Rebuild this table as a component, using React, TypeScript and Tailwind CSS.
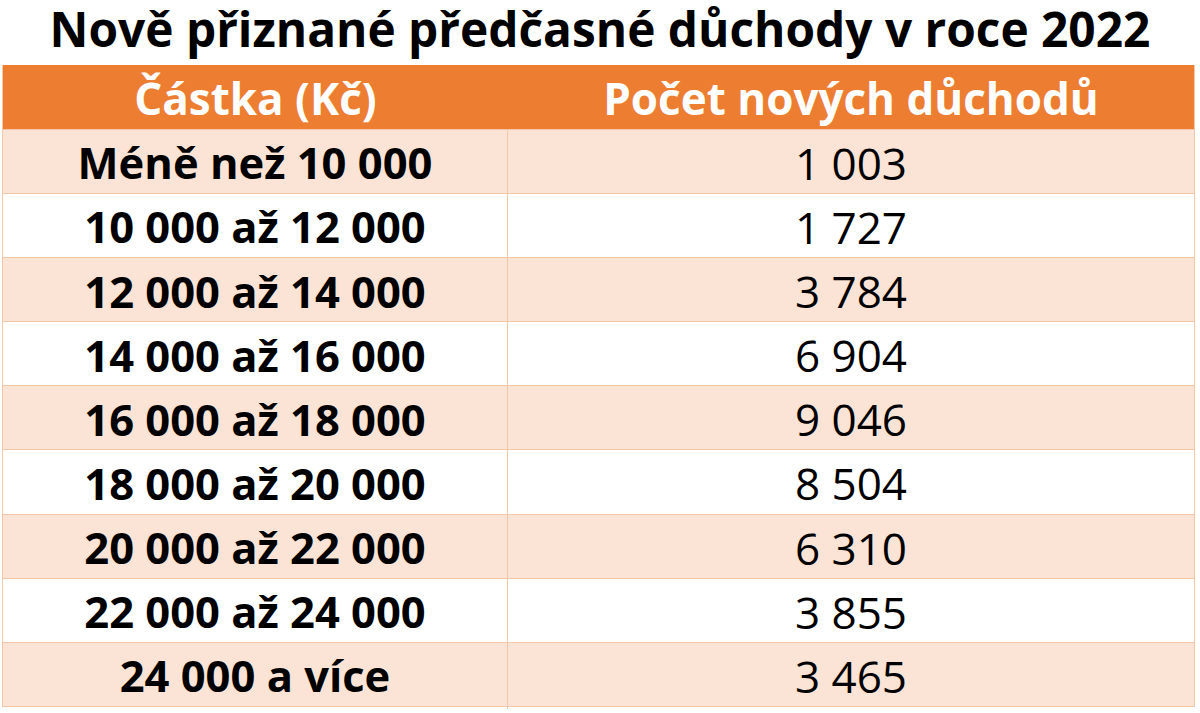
const rows: [string, string][] = [
  ["Méně než 10 000", "1 003"],
  ["10 000 až 12 000", "1 727"],
  ["12 000 až 14 000", "3 784"],
  ["14 000 až 16 000", "6 904"],
  ["16 000 až 18 000", "9 046"],
  ["18 000 až 20 000", "8 504"],
  ["20 000 až 22 000", "6 310"],
  ["22 000 až 24 000", "3 855"],
  ["24 000 a více", "3 465"],
];

export default function App() {
  return (
    <div className="w-[1200px] h-[713px] bg-white text-black overflow-hidden font-['Open_Sans',sans-serif]">
      <div className="h-[65px]">
        <h1 className="text-center text-[47.8px] font-bold leading-[57px] whitespace-nowrap">
          Nově přiznané předčasné důchody v roce 2022
        </h1>
      </div>
      <div className="ml-[2px] w-[1193px] border-x border-b border-[#f4c7a8]">
        <div className="grid grid-cols-[505px_1fr] h-[64px] bg-[#ed7d31] text-white font-bold text-[44px]">
          <div className="flex items-center justify-center">Částka (Kč)</div>
          <div className="flex items-center justify-center">Počet nových důchodů</div>
        </div>
        {rows.map(([a, b], i) => (
          <div
            key={i}
            className={
              "grid grid-cols-[505px_1fr] h-[64.1px] border-t border-[#f4c7a8] " +
              (i % 2 === 0 ? "bg-[#fbe4d5]" : "bg-white")
            }
          >
            <div className="flex items-center justify-center font-bold text-[43.5px] border-r border-[#f4c7a8]">{a}</div>
            <div className="flex items-center justify-center text-[44px]">{b}</div>
          </div>
        ))}
      </div>
    </div>
  );
}
